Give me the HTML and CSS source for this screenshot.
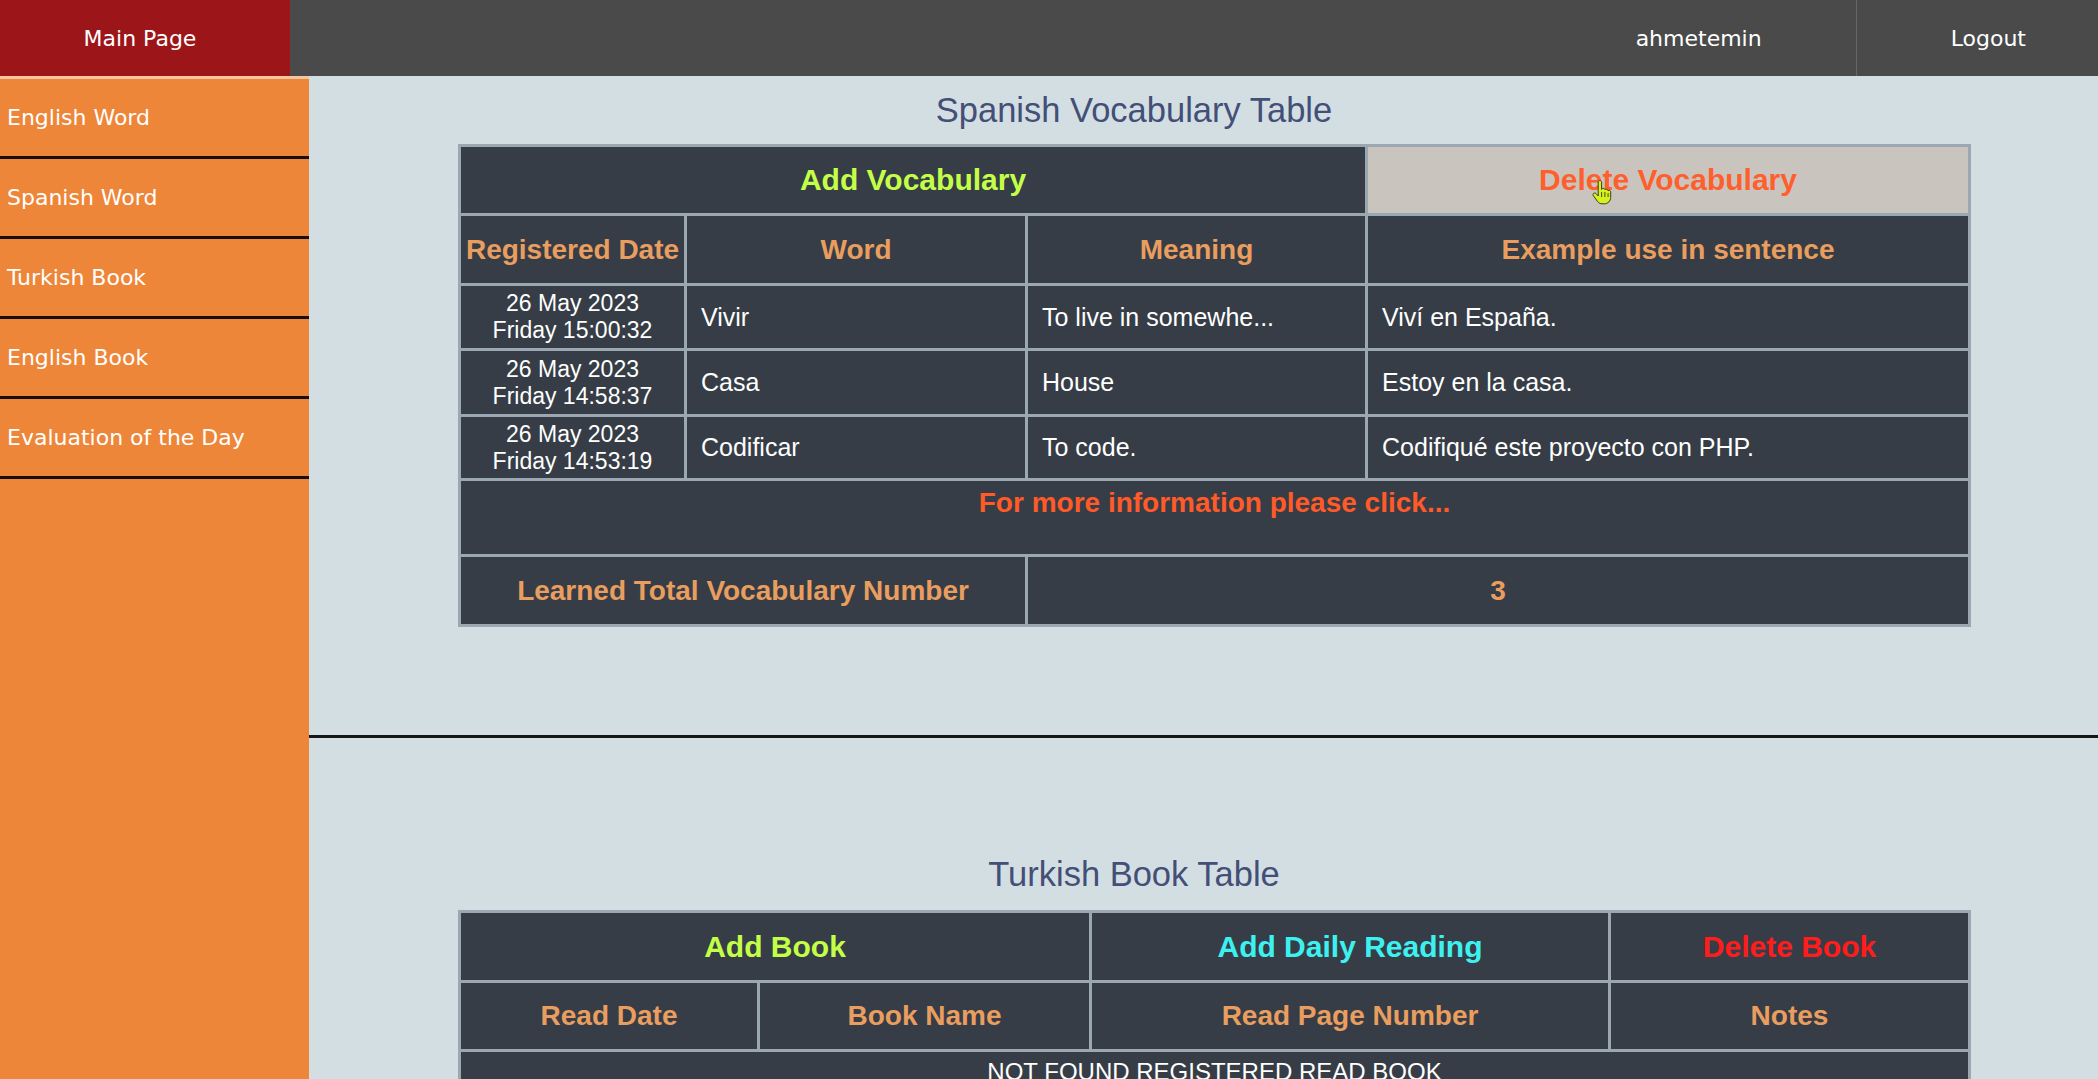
FILE: index.html
```html
<!DOCTYPE html>
<html lang="en">
<head>
<meta charset="utf-8">
<title>Main Page</title>
<link rel="stylesheet" href="styles.css">
</head>
<body>
<header class="topbar">
  <a class="brand">Main Page</a>
  <div class="spacer"></div>
  <a class="user">ahmetemin</a>
  <a class="logout">Logout</a>
</header>
<div class="layout">
  <nav class="sidebar">
    <a class="side-item">English Word</a>
    <a class="side-item">Spanish Word</a>
    <a class="side-item">Turkish Book</a>
    <a class="side-item">English Book</a>
    <a class="side-item">Evaluation of the Day</a>
  </nav>
  <main class="main">
    <section class="block">
      <h2 class="title">Spanish Vocabulary Table</h2>
      <table class="grid vocab">
        <colgroup><col class="c1"><col class="c2"><col class="c3"><col class="c4"></colgroup>
        <tr class="r-btn">
          <td colspan="3" class="btn add">Add Vocabulary</td>
          <td class="btn del hover">Delete Vocabulary
            <svg class="cursor" viewBox="0 0 20 26" width="20" height="26"><path d="M6.2 2.2c0-1 .8-1.7 1.7-1.7s1.7.7 1.7 1.7v7.2c.3-.7 1-1.1 1.7-1.1.9 0 1.6.6 1.7 1.4.3-.3.8-.5 1.3-.5.9 0 1.6.7 1.7 1.5.3-.2.6-.3 1-.3 1 0 1.7.8 1.7 1.7v5.2c0 3.6-2.8 6.5-6.3 6.5H10c-1.8 0-3.2-.8-4.3-2.2L1.4 15.8c-.6-.8-.5-1.9.3-2.5.7-.5 1.7-.4 2.3.3l2.2 2.4V2.2z" fill="#d6f21e" stroke="#3a3a10" stroke-width="1"/><path d="M9.6 12v5M12.9 12v5M16.1 13v4" stroke="#3a3a10" stroke-width=".9"/></svg>
          </td>
        </tr>
        <tr class="r-head">
          <th>Registered Date</th>
          <th>Word</th>
          <th>Meaning</th>
          <th>Example use in sentence</th>
        </tr>
        <tr class="r-d1">
          <td class="date">26 May 2023<br>Friday 15:00:32</td>
          <td>Vivir</td>
          <td>To live in somewhe...</td>
          <td>Viví en España.</td>
        </tr>
        <tr class="r-d2">
          <td class="date">26 May 2023<br>Friday 14:58:37</td>
          <td>Casa</td>
          <td>House</td>
          <td>Estoy en la casa.</td>
        </tr>
        <tr class="r-d3">
          <td class="date">26 May 2023<br>Friday 14:53:19</td>
          <td>Codificar</td>
          <td>To code.</td>
          <td>Codifiqué este proyecto con PHP.</td>
        </tr>
        <tr class="r-info">
          <td colspan="4" class="info">For more information please click...</td>
        </tr>
        <tr class="r-total">
          <th colspan="2">Learned Total Vocabulary Number</th>
          <th colspan="2">3</th>
        </tr>
      </table>
    </section>
    <hr class="divider">
    <section class="block second">
      <h2 class="title">Turkish Book Table</h2>
      <table class="grid books">
        <colgroup><col class="b1"><col class="b2"><col class="b3"><col class="b4"></colgroup>
        <tr class="r-btn2">
          <td colspan="2" class="btn add">Add Book</td>
          <td class="btn daily">Add Daily Reading</td>
          <td class="btn red">Delete Book</td>
        </tr>
        <tr class="r-head2">
          <th>Read Date</th>
          <th>Book Name</th>
          <th>Read Page Number</th>
          <th>Notes</th>
        </tr>
        <tr class="r-empty">
          <td colspan="4" class="empty">NOT FOUND REGISTERED READ BOOK</td>
        </tr>
      </table>
    </section>
  </main>
</div>
</body>
</html>
```
FILE: styles.css
```css
html, body {
  margin: 0;
  padding: 0;
}
body {
  width: 2098px;
  height: 1079px;
  overflow: hidden;
  background: #d3dee3;
  font-family: "DejaVu Sans", Verdana, sans-serif;
}
.topbar {
  display: flex;
  height: 76px;
  background: #4a4a4a;
  color: #ffffff;
  font-size: 22px;
}
.topbar a {
  display: flex;
  align-items: center;
  justify-content: center;
}
.brand {
  width: 280px;
  padding-right: 10px;
  background: #9c1519;
}
.spacer {
  flex: 1;
}
.user {
  padding: 0 94px;
  border-right: 1px solid #666666;
}
.logout {
  padding: 0 72px 0 94px;
}
.layout {
  display: flex;
  height: 1003px;
}
.sidebar {
  width: 309px;
  flex: none;
  background: #ee863a;
  border-top: 3px solid #f4c6a0;
  display: flex;
  flex-direction: column;
}
.side-item {
  height: 77px;
  border-bottom: 3px solid #1a0f08;
  display: flex;
  align-items: center;
  padding-left: 7px;
  color: #ffffff;
  font-size: 22px;
}
.main {
  flex: 1;
  font-family: "Liberation Sans", Arial, sans-serif;
}
.block {
  padding-top: 14px;
}
.block.second {
  padding-top: 116px;
}
.title {
  width: 1650px;
  margin: 0;
  height: 40px;
  line-height: 40px;
  text-align: center;
  font-size: 34.5px;
  font-weight: normal;
  color: #434f77;
}
.grid {
  margin: 14px 0 0 149px;
  width: 1513px;
  table-layout: fixed;
  border-collapse: separate;
  border-spacing: 3px;
  background: #9ba7b1;
}
.grid.books {
  margin-top: 16px;
}
.grid td, .grid th {
  background: #363d46;
  padding: 0 14px;
  vertical-align: middle;
  color: #ffffff;
  font-size: 25px;
  font-weight: normal;
  text-align: left;
}
.grid th {
  text-align: center;
  font-weight: bold;
  font-size: 28px;
  color: #e99e5f;
  padding: 0 4px;
}
.c1 { width: 223px; }
.c2 { width: 338px; }
.c3 { width: 337px; }
.c4 { width: 600px; }
.b1 { width: 296px; }
.b2 { width: 329px; }
.b3 { width: 516px; }
.b4 { width: 357px; }
.grid .btn {
  text-align: center;
  font-weight: bold;
  font-size: 30px;
}
.grid .add { color: #c4ff48; }
.grid .del { color: #ff5f2c; }
.grid .hover {
  background: #c9c5be;
  position: relative;
}
.grid .daily { color: #3ef1f1; }
.grid .red { color: #ff1c1c; }
.cursor {
  position: absolute;
  left: 224px;
  top: 33px;
}
.r-btn td { height: 66px; }
.r-head th { height: 67px; }
.r-d1 td { height: 62px; }
.r-d2 td { height: 63px; }
.r-d3 td { height: 61px; }
.r-info td { height: 67px; }
.r-total th { height: 67px; }
.r-btn2 td { height: 67px; }
.r-head2 th { height: 66px; }
.r-empty td { height: 54px; }
.grid .date {
  text-align: center;
  font-size: 23px;
  line-height: 27px;
  padding: 0 2px;
}
.grid .info {
  text-align: center;
  vertical-align: top;
  padding-top: 6px;
  font-weight: bold;
  font-size: 28px;
  color: #ff5a28;
}
.grid .empty {
  text-align: center;
  vertical-align: top;
  padding-top: 6px;
  font-size: 24px;
}
.divider {
  margin: 108px 0 0 0;
  border: 0;
  height: 3px;
  background: #161616;
}
```
